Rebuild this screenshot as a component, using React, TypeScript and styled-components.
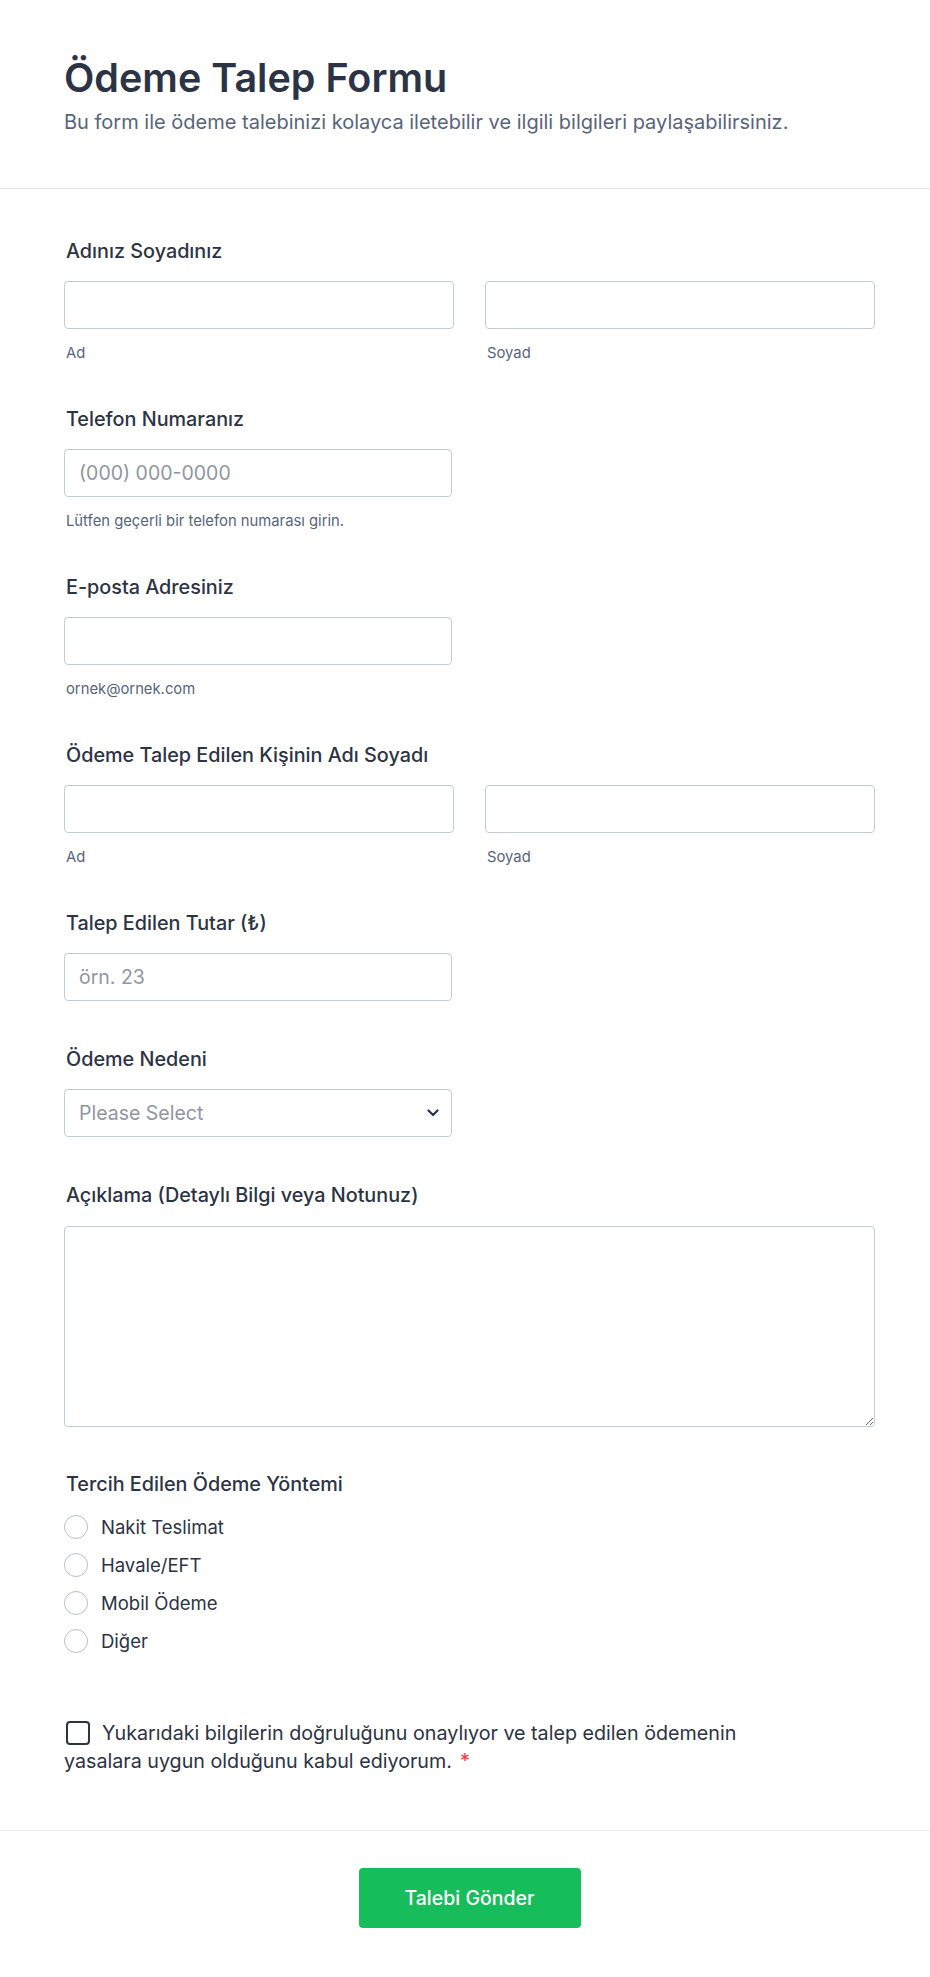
import React from "react";
import styled, { createGlobalStyle } from "styled-components";

const GlobalStyle = createGlobalStyle`
  * {
    box-sizing: border-box;
  }
  body {
    margin: 0;
    background: #fff;
    font-family: Inter, "Noto Sans", sans-serif;
    color: #2c3345;
  }
`;

const Page = styled.div`
  width: 930px;
  min-height: 1977px;
  background: #fff;
`;

const Header = styled.header`
  padding: 54px 64px 52px;
  border-bottom: 1px solid #e3e5eb;
`;

const Title = styled.h1`
  margin: 0;
  font-size: 39.5px;
  line-height: 48px;
  font-weight: 600;
  color: #2c3345;
`;

const Subtitle = styled.p`
  margin: 6px 0 0;
  font-size: 20px;
  line-height: 28px;
  color: #57647e;
`;

const Fields = styled.div`
  padding: 49px 55px 0 64px;
`;

interface IField {
  $top?: number;
  $bottom?: number;
}

const Field = styled.div<IField>`
  padding-top: ${(p) => p.$top ?? 0}px;
  padding-bottom: ${(p) => p.$bottom ?? 44}px;
`;

interface ILabel {
  $gap?: number;
}

const Label = styled.label<ILabel>`
  display: block;
  margin: 0 0 ${(p) => p.$gap ?? 17}px 2px;
  font-size: 19.8px;
  line-height: 26px;
  font-weight: 500;
  color: #2c3345;
`;

const NameGrid = styled.div`
  display: grid;
  grid-template-columns: 1fr 1fr;
  column-gap: 31px;
`;

interface IInput {
  $half?: boolean;
}

const TextInput = styled.input<IInput>`
  display: block;
  width: ${(p) => (p.$half ? "388px" : "100%")};
  height: 48px;
  padding: 0 14px;
  border: 1px solid #c3cad8;
  border-radius: 4px;
  background: #fff;
  font-family: inherit;
  font-size: 19.5px;
  color: #2c3345;
  outline: none;

  &::placeholder {
    color: #8f96a3;
  }
`;

const SubLabel = styled.span`
  display: block;
  margin: 15px 0 0 2px;
  font-size: 14.8px;
  line-height: 18px;
  color: #57647e;
`;

const SelectBox = styled.div`
  display: flex;
  align-items: center;
  justify-content: space-between;
  width: 388px;
  height: 48px;
  padding: 0 12px 0 14px;
  border: 1px solid #c3cad8;
  border-radius: 4px;
  background: #fff;
  font-size: 19.5px;
  color: #8f96a3;
  cursor: pointer;
`;

const TextArea = styled.textarea`
  display: block;
  width: 100%;
  height: 201px;
  padding: 12px 14px;
  border: 1px solid #c3cad8;
  border-radius: 4px;
  font-family: inherit;
  font-size: 18px;
  color: #2c3345;
  outline: none;
`;

const RadioList = styled.div`
  display: flex;
  flex-direction: column;
  gap: 14px;
`;

const RadioRow = styled.label`
  display: flex;
  align-items: center;
  gap: 13px;
  height: 24px;
  font-size: 18.5px;
  color: #2c3345;
`;

const RadioCircle = styled.input.attrs({ type: "radio" })`
  appearance: none;
  margin: 0;
  width: 24px;
  height: 24px;
  border: 1px solid #b8bdc9;
  border-radius: 50%;
  background: #fff;
`;

const Consent = styled.label`
  display: block;
  max-width: 700px;
  font-size: 19.7px;
  line-height: 28px;
  color: #2c3345;
`;

const CheckBox = styled.input.attrs({ type: "checkbox" })`
  appearance: none;
  width: 24px;
  height: 24px;
  margin: 0 12px 0 2px;
  border: 2px solid #2c3345;
  border-radius: 4px;
  vertical-align: -5px;
  background: #fff;
`;

const Required = styled.span`
  margin-left: 8px;
  color: #f23a3c;
`;

const Footer = styled.div`
  display: flex;
  justify-content: center;
  padding: 37px 55px 49px 64px;
  border-top: 1px solid #eceef3;
`;

const SubmitButton = styled.button`
  width: 222px;
  height: 60px;
  border: none;
  border-radius: 4px;
  background: #18bd5b;
  color: #fff;
  font-family: inherit;
  font-size: 19.5px;
  font-weight: 500;
  cursor: pointer;
`;

const Chevron = () => (
  <svg width="12" height="8" viewBox="0 0 12 8" fill="none">
    <path
      d="M1.5 1.5 6 6l4.5-4.5"
      stroke="#2c3345"
      strokeWidth="2.2"
      strokeLinecap="round"
      strokeLinejoin="round"
    />
  </svg>
);

const NameField = ({ label }: { label: string }) => (
  <Field>
    <Label>{label}</Label>
    <NameGrid>
      <div>
        <TextInput />
        <SubLabel>Ad</SubLabel>
      </div>
      <div>
        <TextInput />
        <SubLabel>Soyad</SubLabel>
      </div>
    </NameGrid>
  </Field>
);

const paymentMethods = ["Nakit Teslimat", "Havale/EFT", "Mobil Ödeme", "Diğer"];

const App = () => {
  return (
    <Page>
      <GlobalStyle />
      <Header>
        <Title>Ödeme Talep Formu</Title>
        <Subtitle>
          Bu form ile ödeme talebinizi kolayca iletebilir ve ilgili bilgileri
          paylaşabilirsiniz.
        </Subtitle>
      </Header>

      <Fields>
        <NameField label="Adınız Soyadınız" />

        <Field>
          <Label>Telefon Numaranız</Label>
          <TextInput $half placeholder="(000) 000-0000" />
          <SubLabel>Lütfen geçerli bir telefon numarası girin.</SubLabel>
        </Field>

        <Field>
          <Label>E-posta Adresiniz</Label>
          <TextInput $half type="email" />
          <SubLabel>ornek@ornek.com</SubLabel>
        </Field>

        <NameField label="Ödeme Talep Edilen Kişinin Adı Soyadı" />

        <Field $bottom={45}>
          <Label>Talep Edilen Tutar (₺)</Label>
          <TextInput $half placeholder="örn. 23" />
        </Field>

        <Field $bottom={45}>
          <Label>Ödeme Nedeni</Label>
          <SelectBox role="combobox">
            <span>Please Select</span>
            <Chevron />
          </SelectBox>
        </Field>

        <Field>
          <Label $gap={18}>Açıklama (Detaylı Bilgi veya Notunuz)</Label>
          <TextArea />
        </Field>

        <Field>
          <Label $gap={18}>Tercih Edilen Ödeme Yöntemi</Label>
          <RadioList>
            {paymentMethods.map((method) => (
              <RadioRow key={method}>
                <RadioCircle name="method" />
                {method}
              </RadioRow>
            ))}
          </RadioList>
        </Field>

        <Field $top={22} $bottom={55}>
          <Consent>
            <CheckBox />
            Yukarıdaki bilgilerin doğruluğunu onaylıyor ve talep edilen
            ödemenin yasalara uygun olduğunu kabul ediyorum.
            <Required>*</Required>
          </Consent>
        </Field>
      </Fields>

      <Footer>
        <SubmitButton>Talebi Gönder</SubmitButton>
      </Footer>
    </Page>
  );
};

export default App;
